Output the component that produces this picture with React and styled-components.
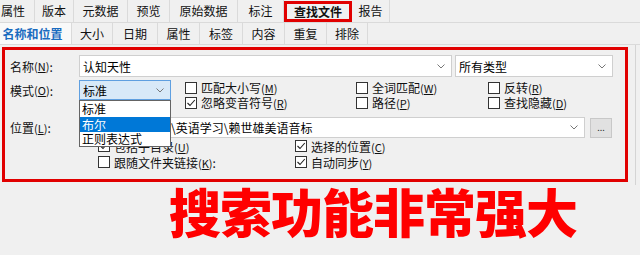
import React from "react";
import styled, { createGlobalStyle } from "styled-components";

const GlobalStyle = createGlobalStyle`
  body {
    margin: 0;
    background: #f0f0f0;
    font-family: "Noto Sans CJK SC", "Noto Sans", sans-serif;
    font-size: 12px;
    color: #000;
  }
`;

const Screen = styled.div`
  width: 640px;
  height: 255px;
  overflow: hidden;
  background: #f0f0f0;
`;

const TabRow = styled.div`
  display: flex;
  height: ${(p) => p.$h}px;
  box-sizing: border-box;
  border-bottom: 1px solid #dadada;
  background: #f0f0f0;
`;

const Tab = styled.div`
  width: ${(p) => p.$w}px;
  box-sizing: border-box;
  display: flex;
  align-items: center;
  justify-content: center;
  padding-right: ${(p) => p.$pr || 0}px;
  border-right: 1px solid #dadada;
  font-size: 12px;
  line-height: 1;
  color: ${(p) => (p.$active ? "#1a6cc0" : "#111")};
  background: ${(p) => (p.$active ? "#f9f9f9" : "transparent")};
  font-weight: ${(p) => (p.$bold ? 700 : 400)};
  ${(p) =>
    p.$marked &&
    `
    border: 3px solid #e10000;
    margin-top: 1px;
    height: 21px;
  `}
`;

const Panel = styled.div`
  width: 636px;
  box-sizing: border-box;
  border-right: 1px solid #d4d4d4;
  padding: 2px 7px 3px 2px;
`;

const RedBox = styled.div`
  border: 3px solid #e10000;
  padding: 5px 0 9px 5px;
  display: flex;
  flex-direction: column;
`;

const Row = styled.div`
  display: flex;
  align-items: ${(p) => p.$align || "center"};
  margin-top: ${(p) => p.$mt || 0}px;
`;

const Label = styled.div`
  width: 69px;
  box-sizing: border-box;
  font-size: 12px;
  white-space: nowrap;
  height: ${(p) => p.$h || 22}px;
  display: flex;
  align-items: center;
  color: #111;
`;

const Mn = styled.span`
  font-size: 11px;
  text-decoration: underline;
  text-underline-offset: 1px;
`;

const Paren = styled.span`
  font-size: 11px;
`;

const Field = styled.div`
  width: ${(p) => p.$w}px;
  height: ${(p) => p.$h || 22}px;
  box-sizing: border-box;
  background: ${(p) => (p.$focus ? "#d8e9f8" : "#fff")};
  border: 1px solid ${(p) => (p.$focus ? "#5f9fe0" : "#cfcfcf")};
  margin-left: ${(p) => p.$ml || 0}px;
  display: flex;
  align-items: center;
  padding: 0 6px 0 3px;
  font-size: 12px;
  overflow: hidden;
  white-space: nowrap;
`;

const FieldText = styled.span`
  flex: 1;
  overflow: hidden;
`;

const Chevron = () => (
  <svg width="8" height="5" viewBox="0 0 8 5">
    <polyline points="0.5,0.5 4,4 7.5,0.5" fill="none" stroke="#777" strokeWidth="1" />
  </svg>
);

const ModeWrap = styled.div`
  position: relative;
  align-self: flex-start;
`;

const Popup = styled.div`
  position: absolute;
  left: 0;
  top: 20px;
  width: 92px;
  box-sizing: border-box;
  background: #fff;
  border: 1px solid #646464;
  z-index: 5;
`;

const PopItem = styled.div`
  height: ${(p) => p.$h || 15}px;
  line-height: ${(p) => p.$h || 15}px;
  padding-left: 2px;
  font-size: 12px;
  background: ${(p) => (p.$sel ? "#0078d7" : "#fff")};
  color: ${(p) => (p.$sel ? "#fff" : "#000")};
`;

const CheckGrid = styled.div`
  display: grid;
  grid-template-columns: ${(p) => p.$cols};
  grid-auto-rows: ${(p) => p.$rh}px;
  margin-left: ${(p) => p.$ml}px;
`;

const CheckItem = styled.div`
  display: flex;
  align-items: center;
  gap: 4px;
  font-size: 12px;
  white-space: nowrap;
  color: #111;
`;

const Box = styled.span`
  width: 12px;
  height: 12px;
  box-sizing: border-box;
  border: 1px solid #333;
  background: #fff;
  display: inline-flex;
  align-items: center;
  justify-content: center;
  flex: none;
`;

const Check = ({ on, children }) => (
  <CheckItem>
    <Box>
      {on && (
        <svg width="10" height="10" viewBox="0 0 10 10">
          <polyline points="1.5,5 4,7.5 8.8,2" fill="none" stroke="#222" strokeWidth="1.1" />
        </svg>
      )}
    </Box>
    <span>{children}</span>
  </CheckItem>
);

const Browse = styled.div`
  width: 22px;
  height: 20px;
  margin-left: 5px;
  box-sizing: border-box;
  background: #e1e1e1;
  border: 1px solid #c8c8c8;
  display: flex;
  align-items: flex-end;
  justify-content: center;
  padding-bottom: 5px;
  font-size: 9px;
  line-height: 1;
  color: #333;
`;

const Caption = styled.div`
  padding-left: 169px;
  font-family: "Noto Sans CJK SC", sans-serif;
  font-weight: 900;
  font-size: 52px;
  line-height: 52px;
  color: #ff0000;
  letter-spacing: -1px;
  white-space: nowrap;
`;

const m = (t, k) => (
  <>
    {t}
    <Paren>(</Paren>
    <Mn>{k}</Mn>
    <Paren>)</Paren>
  </>
);

export default function App() {
  return (
    <Screen>
      <GlobalStyle />
      <TabRow $h={23}>
        <Tab $w={35} $pr={8}>属性</Tab>
        <Tab $w={39}>版本</Tab>
        <Tab $w={54}>元数据</Tab>
        <Tab $w={42}>预览</Tab>
        <Tab $w={68}>原始数据</Tab>
        <Tab $w={46}>标注</Tab>
        <Tab $w={68} $marked $bold>查找文件</Tab>
        <Tab $w={38}>报告</Tab>
      </TabRow>
      <TabRow $h={22}>
        <Tab $w={72} $pr={6} $active $bold>名称和位置</Tab>
        <Tab $w={41}>大小</Tab>
        <Tab $w={45}>日期</Tab>
        <Tab $w={42}>属性</Tab>
        <Tab $w={43}>标签</Tab>
        <Tab $w={42}>内容</Tab>
        <Tab $w={42}>重复</Tab>
        <Tab $w={41}>排除</Tab>
      </TabRow>
      <Panel>
        <RedBox>
          <Row>
            <Label>名称{m("", "N")}:</Label>
            <Field $w={373}>
              <FieldText>认知天性</FieldText>
              <Chevron />
            </Field>
            <Field $w={158} $ml={3}>
              <FieldText>所有类型</FieldText>
              <Chevron />
            </Field>
          </Row>
          <Row $mt={3} $align="flex-start">
            <Label $h={20}>模式{m("", "O")}:</Label>
            <ModeWrap>
              <Field $w={92} $h={20} $focus>
                <FieldText>标准</FieldText>
                <Chevron />
              </Field>
              <Popup>
                <PopItem $h={16}>标准</PopItem>
                <PopItem $h={15} $sel>布尔</PopItem>
                <PopItem $h={14}>正则表达式</PopItem>
              </Popup>
            </ModeWrap>
            <CheckGrid $cols="171px 132px 1fr" $rh={15} $ml={14}>
              <Check>{m("匹配大小写", "M")}</Check>
              <Check>{m("全词匹配", "W")}</Check>
              <Check>{m("反转", "R")}</Check>
              <Check on>{m("忽略变音符号", "R")}</Check>
              <Check>{m("路径", "P")}</Check>
              <Check>{m("查找隐藏", "D")}</Check>
            </CheckGrid>
          </Row>
          <Row $mt={7}>
            <Label $h={21}>位置{m("", "L")}:</Label>
            <Field $w={506} $h={21}>
              <FieldText>D:\学习资料\英E\英语学习\赖世雄美语音标</FieldText>
              <Chevron />
            </Field>
            <Browse>...</Browse>
          </Row>
          <CheckGrid $cols="197px 1fr" $rh={16} $ml={88}>
            <Check on>{m("包括子目录", "U")}</Check>
            <Check on>{m("选择的位置", "C")}</Check>
            <Check>{m("跟随文件夹链接", "K")}:</Check>
            <Check on>{m("自动同步", "Y")}</Check>
          </CheckGrid>
        </RedBox>
      </Panel>
      <Caption>搜索功能非常强大</Caption>
    </Screen>
  );
}
